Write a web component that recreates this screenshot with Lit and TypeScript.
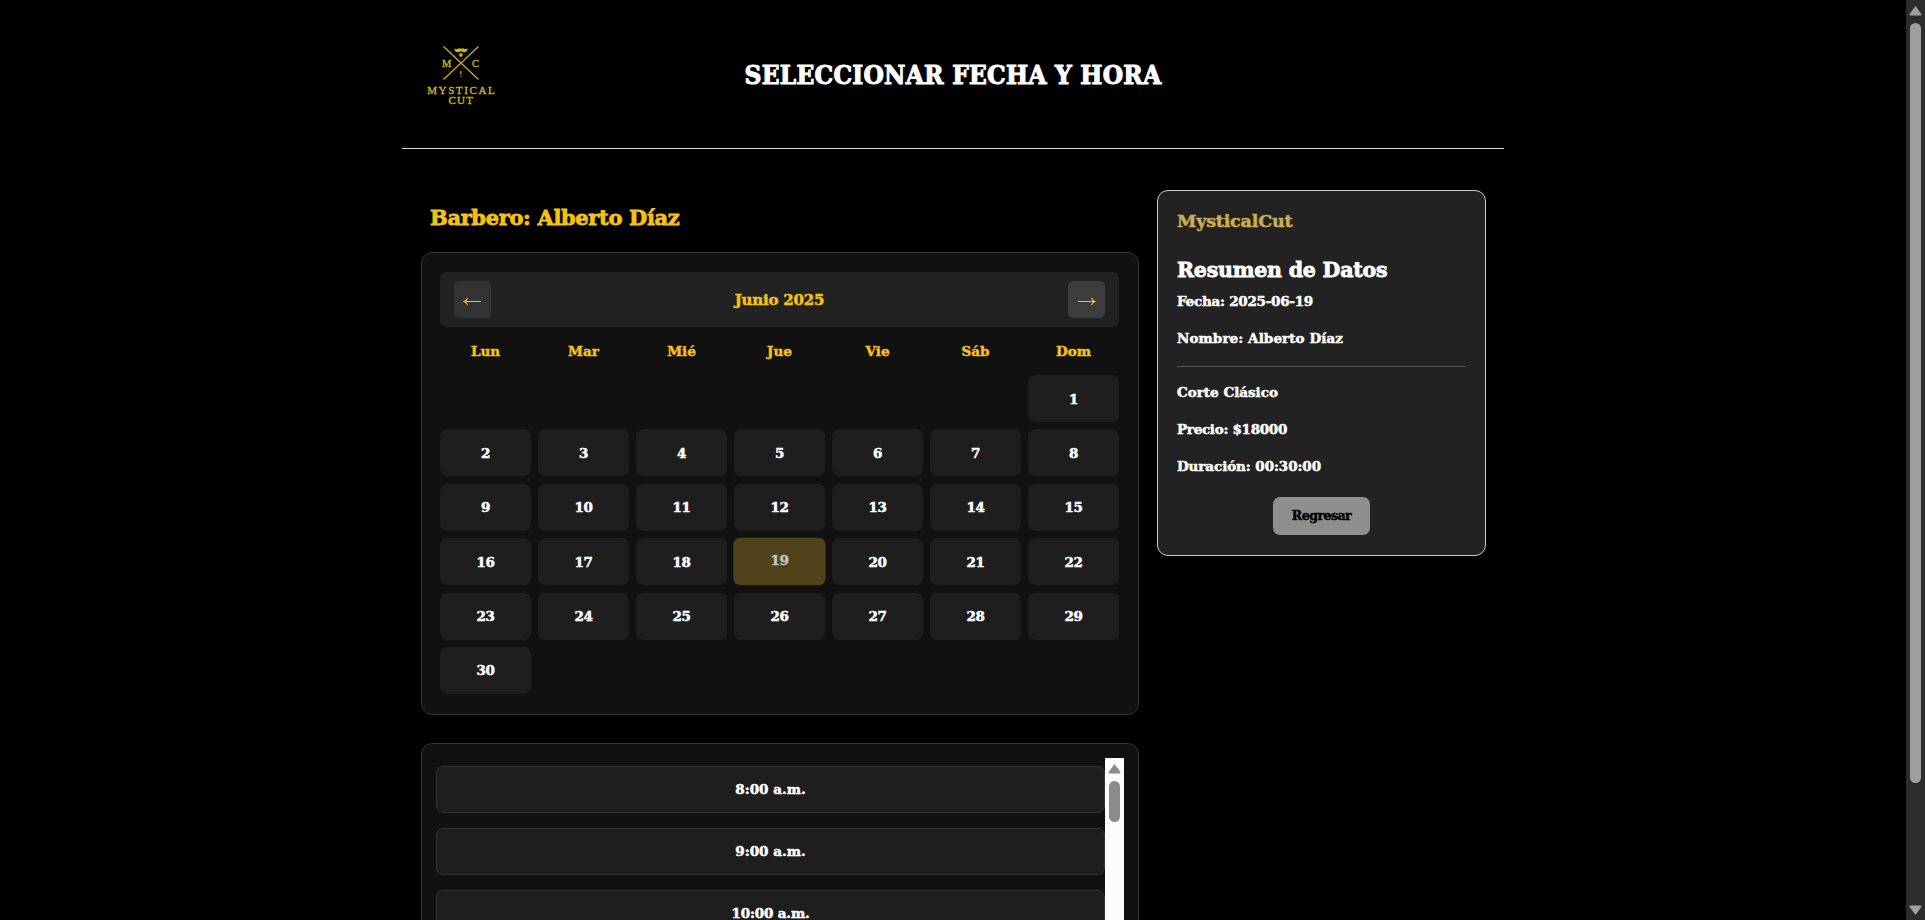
import { LitElement, html, css, svg } from "lit";
import { customElement, state } from "lit/decorators.js";
import { classMap } from "lit/directives/class-map.js";

const WEEKDAYS = ["Lun", "Mar", "Mié", "Jue", "Vie", "Sáb", "Dom"];
const DAYS = Array.from({ length: 30 }, (_, i) => i + 1);
const HOURS = ["8:00 a.m.", "9:00 a.m.", "10:00 a.m."];

@customElement("brand-logo")
export class BrandLogo extends LitElement {
  static styles = css`
    :host { display: block; width: 117px; height: 80px; font-weight: 400; -webkit-text-stroke: 0; }
    svg { display: block; }
    .ink { stroke: #c9ae12; fill: none; stroke-width: 1.3; }
    .solid { fill: #d0b414; }
    text { fill: #d2b512; stroke: #d2b512; stroke-width: 0.35; font-family: "Liberation Serif", serif; }
  `;
  render() {
    return html`<svg width="117" height="80" viewBox="402 35 117 80" role="img" aria-label="Mystical Cut">
      ${svg`
        <path class="ink" d="M443.5 46.5 L478.5 79.5 M478.5 46.5 L443.5 79.5" />
        <path class="solid" d="M454.6 48 C455.3 49.8 457 49 458.6 48.4 C460 48 460.6 48.4 461 48.9 C461.4 48.4 462 48 463.4 48.4 C465 49 466.7 49.8 467.4 48 C468 51.8 465 53 462.6 52 C461.6 51.4 460.4 51.4 459.4 52 C457 53 454 51.8 454.6 48 Z" />
        <path class="solid" d="M459.3 53.3 H462.5 V55.6 L460.9 57.6 L459.3 55.6 Z" />
        <path class="ink" d="M460.9 71 V74.6 M460.9 76 V77" />
        <text x="442" y="67" font-size="10.5">M</text>
        <text x="472" y="67" font-size="10.5">C</text>
        <text x="427.2" y="94" font-size="11" textLength="67.5" lengthAdjust="spacing">MYSTICAL</text>
        <text x="448.5" y="104" font-size="11" textLength="24.5" lengthAdjust="spacing">CUT</text>
      `}
    </svg>`;
  }
}

@customElement("scroll-track")
export class ScrollTrack extends LitElement {
  static styles = css`
    :host { display: flex; flex-direction: column; align-items: center; width: 19px; box-sizing: border-box; background: var(--track); }
    svg { display: block; flex: none; fill: var(--thumb); stroke: var(--thumb); stroke-width: 2; stroke-linejoin: round; }
    .thumb { width: 11px; height: var(--length); border-radius: 6px; background: var(--thumb); }
    .fill { flex: 1; }
  `;
  render() {
    return html`
      <svg width="19" height="23" viewBox="0 0 19 23"><path d="M9.5 7.5 L14.5 14.5 H4.5 Z" /></svg>
      <div class="thumb"></div>
      <div class="fill"></div>
      <svg width="19" height="23" viewBox="0 0 19 23"><path d="M9.5 16.5 L14.5 9.5 H4.5 Z" /></svg>
    `;
  }
}

@customElement("app-root")
export class AppRoot extends LitElement {
  @state() private selected = 19;

  static styles = css`
    :host {
      display: flex; height: 920px; overflow: hidden; background: #000; color: #fff;
      font-family: "DejaVu Serif", serif; font-weight: 700; font-size: 13.5px; -webkit-text-stroke: 0.5px;
    }
    * { box-sizing: border-box; }
    h1, h2, h3, p { margin: 0; font-weight: 700; }
    button { font: inherit; color: inherit; border: 0; padding: 0; letter-spacing: inherit; }
    .view { flex: 1; min-width: 0; display: flex; flex-direction: column; align-items: center; }
    .page-bar { --track: #2c2c2c; --thumb: #9f9f9f; --length: 760px; height: 920px; }

    header {
      width: 1102px; height: 149px; flex: none; border-bottom: 1px solid #e0e0e0;
      display: grid; grid-template-columns: 117px 1fr 117px; align-items: start; padding-top: 35px;
    }
    h1 {
      font-family: "DejaVu Serif Condensed", "DejaVu Serif", serif; font-size: 26px; line-height: 30px;
      letter-spacing: 0.24px; text-align: center; padding-top: 25px; -webkit-text-stroke: 1px;
    }
    main { width: 1065px; margin-left: 1px; display: grid; grid-template-columns: 718px 329px; justify-content: space-between; align-items: start; padding-top: 41px; }
    .barber {
      font-size: 21px; line-height: 26px; letter-spacing: -0.35px; color: #f5c211;
      padding: 15px 0 21px 9px; -webkit-text-stroke: 0.8px;
    }

    .card { background: #111; border: 1px solid #333; border-radius: 11px; }
    .calendar { height: 463px; padding: 19px 19px 19px 18px; }
    .month { height: 55px; background: #222; border-radius: 7px; padding: 0 14px; display: flex; align-items: center; justify-content: space-between; }
    .month h3 { font-size: 15px; letter-spacing: -0.2px; color: #f5c211; }
    .step { width: 37px; height: 37px; border-radius: 5px; background: #333; display: grid; place-items: center; }
    .step.hover { background: #3c3c3c; }
    .step svg { display: block; fill: none; stroke: #f5c211; stroke-width: 1.2; }
    .week, .days { display: grid; grid-template-columns: repeat(7, 91px); column-gap: 7px; text-align: center; }
    .week { height: 48px; line-height: 49px; color: #f5c211; }
    .days { grid-auto-rows: 47px; row-gap: 7.4px; letter-spacing: -0.5px; }
    .day { background: #1e1e1e; border-radius: 7px; }
    .day:first-child { grid-column: 7; }
    .day.selected { background: #50421b; color: #c3c0b8; transform: scale(1.015); padding-bottom: 3px; }

    .times { margin-top: 28px; height: 300px; padding: 14px; display: flex; }
    .slots { flex: 1; display: flex; flex-direction: column; gap: 15px; padding-top: 8px; }
    .slot { height: 47px; flex: none; background: #1e1e1e; border: 1px solid #333; border-radius: 7px; padding-bottom: 2px; }
    .slot:nth-child(3) { letter-spacing: -0.15px; }
    .times scroll-track { --track: #fcfcfc; --thumb: #8b8b8b; --length: 41px; }

    .summary { height: 366px; background: #222; border: 1px solid #ccc; border-radius: 11px; padding: 18px 19px 0; display: flex; flex-direction: column; line-height: 18px; }
    .brand { font-size: 17.5px; line-height: 24px; letter-spacing: -0.2px; color: #cdae52; }
    .summary h2 { font-size: 20.5px; line-height: 26px; letter-spacing: -0.2px; margin: 24px 0 9px; -webkit-text-stroke: 0.8px; }
    .date { letter-spacing: -0.25px; }
    .name { letter-spacing: 0.08px; margin-top: 19px; }
    .rule { height: 1px; flex: none; background: #555; margin: 19px 0 16px; }
    .price { letter-spacing: -0.3px; margin: 19px 0; }
    .length { letter-spacing: -0.09px; }
    .back {
      align-self: center; width: 97px; height: 38px; margin-top: 22px; border-radius: 7px; background: #8e8e8e; color: #000;
      font-size: 12.5px; letter-spacing: -0.5px; flex: none;
    }
  `;

  render() {
    return html`
      <div class="view">
        <header>
          <brand-logo></brand-logo>
          <h1>SELECCIONAR FECHA Y HORA</h1>
        </header>
        <main>
          <section>
            <h2 class="barber">Barbero: Alberto Díaz</h2>
            <div class="card calendar">
              <div class="month">
                <button class="step" aria-label="Mes anterior">
                  <svg width="19" height="11" viewBox="0 0 19 11"><path d="M18 7.5 H1 M4.5 4 Q3.5 6.8 1 7.5 Q3.5 8.2 4.5 11" /></svg>
                </button>
                <h3>Junio 2025</h3>
                <button class="step hover" aria-label="Mes siguiente">
                  <svg width="19" height="11" viewBox="0 0 19 11"><path d="M1 7.5 H18 M14.5 4 Q15.5 6.8 18 7.5 Q15.5 8.2 14.5 11" /></svg>
                </button>
              </div>
              <div class="week">${WEEKDAYS.map((d) => html`<span>${d}</span>`)}</div>
              <div class="days">
                ${DAYS.map((d) => html`<button
                  class=${classMap({ day: true, selected: d === this.selected })}
                  @click=${() => (this.selected = d)}>${d}</button>`)}
              </div>
            </div>
            <div class="card times">
              <div class="slots">${HOURS.map((h) => html`<button class="slot">${h}</button>`)}</div>
              <scroll-track></scroll-track>
            </div>
          </section>
          <aside class="summary">
            <h3 class="brand">MysticalCut</h3>
            <h2>Resumen de Datos</h2>
            <p class="date">Fecha: 2025-06-${this.selected}</p>
            <p class="name">Nombre: Alberto Díaz</p>
            <div class="rule"></div>
            <p>Corte Clásico</p>
            <p class="price">Precio: $18000</p>
            <p class="length">Duración: 00:30:00</p>
            <button class="back">Regresar</button>
          </aside>
        </main>
      </div>
      <scroll-track class="page-bar"></scroll-track>
    `;
  }
}
